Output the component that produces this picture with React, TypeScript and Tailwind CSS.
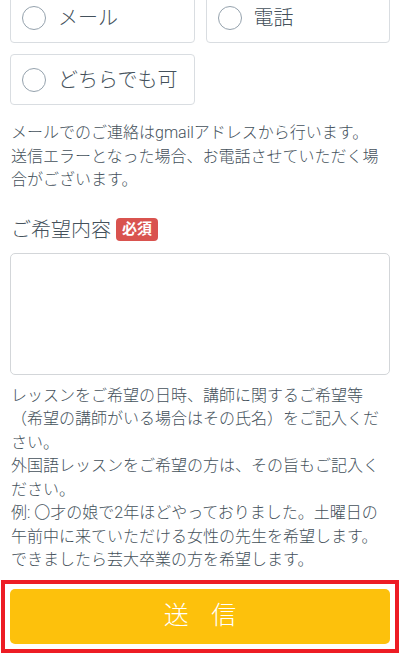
const FONT = { fontFamily: 'Roboto, "Noto Sans CJK JP", sans-serif' };

const contactOptions = ["メール", "電話", "どちらでも可"];

const helpLines = [
  "レッスンをご希望の日時、講師に関するご希望等",
  "（希望の講師がいる場合はその氏名）をご記入くだ",
  "さい。",
  "外国語レッスンをご希望の方は、その旨もご記入く",
  "ださい。",
  "例: 〇才の娘で2年ほどやっておりました。土曜日の",
  "午前中に来ていただける女性の先生を希望します。",
  "できましたら芸大卒業の方を希望します。",
];

function RadioBox({ label }: { label: string }) {
  return (
    <label className="flex h-[51px] items-center gap-[12px] rounded-[4px] border border-[#d9dde1] bg-white pl-[11px]">
      <span className="h-[24px] w-[24px] shrink-0 rounded-full border-[1.5px] border-[#95a2ad] bg-white" />
      <span className="text-[20px] leading-none text-[#44515b]">{label}</span>
    </label>
  );
}

export default function App() {
  return (
    <div className="min-h-screen overflow-hidden bg-white px-[10px] font-light text-[#44515b]" style={FONT}>
      <div className="-mt-[8px] grid grid-cols-2 gap-x-[11px] gap-y-[11px]">
        {contactOptions.map((o) => (
          <RadioBox key={o} label={o} />
        ))}
      </div>

      <p className="mt-[16px] pl-[1px] text-[16px] leading-[23.5px]">
        メールでのご連絡はgmailアドレスから行います。
        <br />
        送信エラーとなった場合、お電話させていただく場合がございます。
      </p>

      <div className="mt-[26px] flex items-center gap-[5px] pl-[1px]">
        <span className="text-[20px] leading-[24px]">ご希望内容</span>
        <span className="rounded-[4px] bg-[#d9534f] px-[6px] py-[2px] text-[15px] font-bold leading-[19px] text-white">
          必須
        </span>
      </div>

      <textarea className="mt-[11px] block h-[122px] w-full resize-none rounded-[5px] border border-[#d3d6d9] bg-white outline-none" />

      <div className="mt-[9px] pl-[1px] text-[16px] leading-[23.5px]">
        {helpLines.map((l) => (
          <div key={l} className="whitespace-nowrap">
            {l}
          </div>
        ))}
      </div>

      <div className="-mx-[9px] mt-[8px] border-[4px] border-[#ed1c24] bg-white p-[5px]">
        <button className="flex h-[55px] w-full items-center justify-center rounded-[5px] bg-[#fdc10c] text-[25px] font-light tracking-[0.9em] text-white">
          <span className="pl-[0.9em]">送信</span>
        </button>
      </div>
    </div>
  );
}
